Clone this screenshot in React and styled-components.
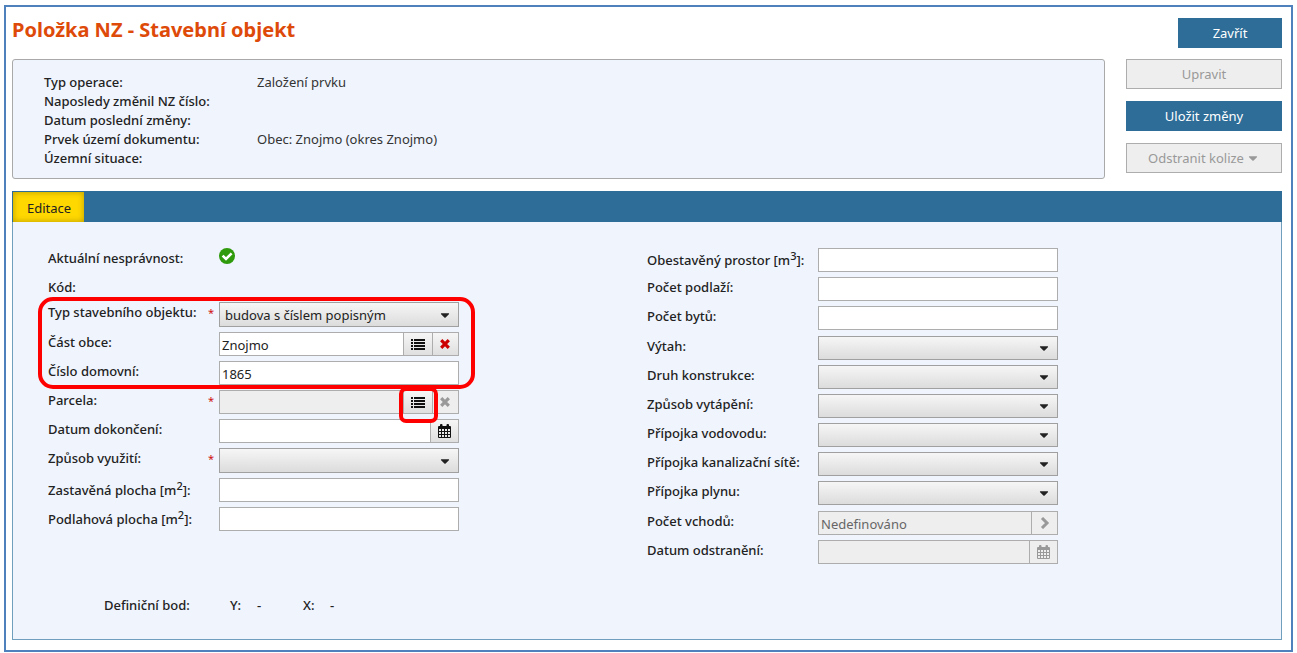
import { useId } from 'react'
import styled, { createGlobalStyle, css } from 'styled-components'
import { FaCaretDown } from 'react-icons/fa'

const GlobalStyle = createGlobalStyle`
  :root {
    --brand: #2d6d98;
    --accent: #de4a09;
    --surface: #eff4fd;
    --disabled: #eeeeee;
    --field-border: #adadad;
    --text: #222222;
    --text-light: #333333;
    --mark: #ff0000;
  }
  * {
    box-sizing: border-box;
  }
  body {
    margin: 0;
    background-color: #ffffff;
    color: var(--text);
    font-family: 'Noto Sans', 'Open Sans', sans-serif;
    font-size: 13px;
    line-height: 20px;
  }
  button,
  input,
  select {
    font: inherit;
    color: inherit;
  }
`

const Page = styled.main`
  margin: 5px 4px 1px;
  padding: 11px 9px 10px 6px;
  border: 2px solid #4f81bd;
`

const Header = styled.header`
  display: flex;
  justify-content: space-between;
  align-items: flex-start;
  margin-bottom: 11px;
`
const Title = styled.h1`
  margin: 0;
  color: var(--accent);
  font-size: 20px;
  font-weight: 700;
  line-height: 24px;
`

const ActionButton = styled.button`
  display: flex;
  justify-content: center;
  align-items: center;
  gap: 2px;
  width: ${({ $compact }) => ($compact ? '104px' : '100%')};
  height: 30px;
  padding: 0;
  border: 1px solid var(--brand);
  background-color: var(--brand);
  color: #ffffff;
  &:disabled {
    border-color: var(--field-border);
    background-color: var(--disabled);
    color: #999999;
  }
`

const Overview = styled.section`
  display: flex;
  align-items: stretch;
  gap: 21px;
  margin-bottom: 12px;
`
const InfoList = styled.dl`
  flex: 1;
  display: grid;
  grid-template-columns: 213px 1fr;
  grid-auto-rows: 19px;
  line-height: 19px;
  margin: 0;
  padding: 13px 31px 10px;
  border: 1px solid #a9a9a9;
  border-radius: 3px;
  background-color: var(--surface);
  dt {
    font-weight: 500;
  }
  dd {
    margin: 0;
    color: var(--text-light);
  }
`
const Actions = styled.div`
  display: flex;
  flex-direction: column;
  gap: 12px;
  width: 156px;
`

const TabBar = styled.nav`
  display: flex;
  height: 31px;
  padding: 1px 1px 0;
  background-color: var(--brand);
`
const Tab = styled.button`
  padding: 2px 13px 0 14px;
  border: 0;
  background-color: #ffd800;
  box-shadow: inset 0 0 6px #b99a00;
`
const Panel = styled.form`
  padding: 26px 35px 24px;
  border: 1px solid #6f9fbd;
  border-top: 0;
  background-color: var(--surface);
`
const Columns = styled.div`
  display: grid;
  grid-template-columns: 1fr 1fr;
`
const Column = styled.div`
  display: flex;
  flex-direction: column;
  align-items: flex-start;
  gap: ${({ $gap }) => $gap}px;
`
const Group = styled.div`
  display: flex;
  flex-direction: column;
  gap: ${({ $gap = 5 }) => $gap}px;
`
// red outline drawn over the form, spreads outside its own box
const outline = css`
  position: relative;
  &::after {
    content: '';
    position: absolute;
    z-index: 1;
    border: 4px solid var(--mark);
    pointer-events: none;
  }
`
const MarkedGroup = styled(Group)`
  ${outline}
  &::after {
    inset: -5px -16px -4px -10px;
    border-radius: 15px;
  }
`
const MarkedButton = styled.span`
  ${outline}
  display: flex;
  &::after {
    inset: -3px -5px -9px -5px;
    border-radius: 7px;
  }
`

const Row = styled.div`
  display: grid;
  grid-template-columns: 160px 11px 240px;
  align-items: start;
`
const Label = styled.label`
  font-weight: 500;
  white-space: nowrap;
  sup {
    font-size: 11px;
    line-height: 16px;
  }
`
const Required = styled.span`
  color: #d01010;
  font-size: 11px;
  line-height: 22px;
`
const Status = styled.span`
  display: flex;
`

const control = css`
  height: ${({ $tall }) => ($tall ? 25 : 24)}px;
  border: 1px solid var(--field-border);
  border-radius: 0;
`
const Field = styled.div`
  display: flex;
`
const Input = styled.input`
  ${control}
  flex: 1;
  min-width: 0;
  padding: 2px 2px 0;
  background-color: #ffffff;
  &:disabled {
    background-color: var(--disabled);
    color: #666666;
  }
`
const IconButton = styled.button`
  ${control}
  display: flex;
  justify-content: center;
  align-items: center;
  width: ${({ $width = 29 }) => $width}px;
  margin-left: -1px;
  padding: 0;
  background: linear-gradient(#f6f6f6, #dfdfdf);
  color: ${({ $danger }) => ($danger ? '#cc0000' : '#111111')};
  &:disabled {
    background: var(--disabled);
    color: #999999;
  }
`
const SelectBox = styled.div`
  position: relative;
  display: flex;
  align-items: center;
  svg {
    position: absolute;
    right: 7px;
    pointer-events: none;
  }
`
const Select = styled.select`
  ${control}
  width: 100%;
  padding: 1px 24px 0 5px;
  appearance: none;
  border-color: #a0a0a0;
  background: linear-gradient(#f6f6f6, #dcdcdc);
`

const Point = styled.dl`
  display: flex;
  margin: 31px 0 0 56px;
  font-weight: 500;
  dt {
    width: 27px;
  }
  dt:first-child {
    width: 126px;
  }
  dd {
    width: 46px;
    margin: 0;
  }
`

const CheckIcon = () => (
  <svg width="16" height="16" viewBox="0 0 16 16" role="img" aria-label="V pořádku">
    <circle cx="8" cy="8" r="8" fill="#2f9a0c" />
    <path d="M3.6 7.6L7 11l5.6-5.6" fill="none" stroke="#ffffff" strokeWidth="2.6" />
  </svg>
)
const ListIcon = () => (
  <svg width="14" height="11" viewBox="0 0 14 11" fill="currentColor" aria-hidden="true">
    <path d="M0 0h2v2H0zM3 0h11v2H3zM0 3h2v2H0zM3 3h11v2H3zM0 6h2v2H0zM3 6h11v2H3zM0 9h2v2H0zM3 9h11v2H3z" />
  </svg>
)
const CrossIcon = () => (
  <svg width="11" height="10" viewBox="0 0 11 10" stroke="currentColor" strokeWidth="3.2" aria-hidden="true">
    <path d="M1.2 1.2l7.6 7.6M8.8 1.2L1.2 8.8" />
  </svg>
)
const ChevronIcon = () => (
  <svg width="10" height="12" viewBox="0 0 10 12" fill="none" stroke="currentColor" strokeWidth="3" aria-hidden="true">
    <path d="M2 1l5 5-5 5" />
  </svg>
)
const CalendarIcon = () => (
  <svg width="13" height="14" viewBox="0 0 13 14" fill="currentColor" aria-hidden="true">
    <path
      fillRule="evenodd"
      d="M1 2h1V1a1 1 0 0 1 1-1h.5a1 1 0 0 1 1 1v1h4V1a1 1 0 0 1 1-1h.5a1 1 0 0 1 1 1v1h1a1 1 0 0 1 1 1v10a1 1 0 0 1-1 1H1a1 1 0 0 1-1-1V3a1 1 0 0 1 1-1zM1 5v2h2V5zM4 5v2h2V5zM7 5v2h2V5zM10 5v2h2V5zM1 8v2h2V8zM4 8v2h2V8zM7 8v2h2V8zM10 8v2h2V8zM1 11v2h2v-2zM4 11v2h2v-2zM7 11v2h2v-2zM10 11v2h2v-2z"
    />
  </svg>
)

const FormRow = ({ label, required, children }) => {
  const id = useId()
  return (
    <Row>
      <Label htmlFor={id}>{label}</Label>
      <Required>{required && '*'}</Required>
      {children(id)}
    </Row>
  )
}

const TextRow = ({ label, required, value = '', disabled, buttons }) => (
  <FormRow label={label} required={required}>
    {(id) => (
      <Field>
        <Input id={id} type="text" defaultValue={value} disabled={disabled} />
        {buttons}
      </Field>
    )}
  </FormRow>
)

const SelectRow = ({ label, required, value = '', tall }) => (
  <FormRow label={label} required={required}>
    {(id) => (
      <SelectBox>
        <Select id={id} defaultValue={value} $tall={tall}>
          <option value={value}>{value}</option>
        </Select>
        <FaCaretDown size={14} />
      </SelectBox>
    )}
  </FormRow>
)

const info = [
  ['Typ operace:', 'Založení prvku'],
  ['Naposledy změnil NZ číslo:', ''],
  ['Datum poslední změny:', ''],
  ['Prvek území dokumentu:', 'Obec: Znojmo (okres Znojmo)'],
  ['Územní situace:', '']
]

const selects = [
  'Výtah:',
  'Druh konstrukce:',
  'Způsob vytápění:',
  'Přípojka vodovodu:',
  'Přípojka kanalizační sítě:',
  'Přípojka plynu:'
]

const App = () => (
  <>
    <GlobalStyle />
    <Page>
      <Header>
        <Title>Položka NZ - Stavební objekt</Title>
        <ActionButton type="button" $compact>
          Zavřít
        </ActionButton>
      </Header>
      <Overview>
        <InfoList>
          {info.map(([name, value]) => [<dt key={name}>{name}</dt>, <dd key={`${name}-value`}>{value}</dd>])}
        </InfoList>
        <Actions>
          <ActionButton type="button" disabled>
            Upravit
          </ActionButton>
          <ActionButton type="button">Uložit změny</ActionButton>
          <ActionButton type="button" disabled>
            Odstranit kolize
            <FaCaretDown size={14} />
          </ActionButton>
        </Actions>
      </Overview>
      <TabBar>
        <Tab type="button">Editace</Tab>
      </TabBar>
      <Panel>
        <Columns>
          <Column $gap={5}>
            <Group $gap={9}>
              <Row>
                <Label as="span">Aktuální nesprávnost:</Label>
                <span />
                <Status>
                  <CheckIcon />
                </Status>
              </Row>
              <Row>
                <Label as="span">Kód:</Label>
              </Row>
            </Group>
            <MarkedGroup>
              <SelectRow label="Typ stavebního objektu:" value="budova s číslem popisným" required tall />
              <TextRow
                label="Část obce:"
                value="Znojmo"
                buttons={
                  <>
                    <IconButton type="button" aria-label="Vybrat" $width={30}>
                      <ListIcon />
                    </IconButton>
                    <IconButton type="button" aria-label="Smazat" $width={27} $danger>
                      <CrossIcon />
                    </IconButton>
                  </>
                }
              />
              <TextRow label="Číslo domovní:" value="1865" />
            </MarkedGroup>
            <Group>
              <TextRow
                label="Parcela:"
                required
                disabled
                buttons={
                  <>
                    <MarkedButton>
                      <IconButton type="button" aria-label="Vybrat" $width={30}>
                        <ListIcon />
                      </IconButton>
                    </MarkedButton>
                    <IconButton type="button" aria-label="Smazat" $width={27} disabled>
                      <CrossIcon />
                    </IconButton>
                  </>
                }
              />
              <TextRow
                label="Datum dokončení:"
                buttons={
                  <IconButton type="button" aria-label="Kalendář">
                    <CalendarIcon />
                  </IconButton>
                }
              />
              <SelectRow label="Způsob využití:" required tall />
              <TextRow
                label={
                  <>
                    Zastavěná plocha [m<sup>2</sup>]:
                  </>
                }
              />
              <TextRow
                label={
                  <>
                    Podlahová plocha [m<sup>2</sup>]:
                  </>
                }
              />
            </Group>
          </Column>
          <Column $gap={6}>
            <Group>
              <TextRow
                label={
                  <>
                    Obestavěný prostor [m<sup>3</sup>]:
                  </>
                }
              />
              <TextRow label="Počet podlaží:" />
              <TextRow label="Počet bytů:" />
            </Group>
            <Group>
              {selects.map((label) => (
                <SelectRow key={label} label={label} />
              ))}
            </Group>
            <Group>
              <TextRow
                label="Počet vchodů:"
                value="Nedefinováno"
                disabled
                buttons={
                  <IconButton type="button" aria-label="Další" $width={27} disabled>
                    <ChevronIcon />
                  </IconButton>
                }
              />
              <TextRow
                label="Datum odstranění:"
                disabled
                buttons={
                  <IconButton type="button" aria-label="Kalendář" disabled>
                    <CalendarIcon />
                  </IconButton>
                }
              />
            </Group>
          </Column>
        </Columns>
        <Point>
          <dt>Definiční bod:</dt>
          <dt>Y:</dt>
          <dd>-</dd>
          <dt>X:</dt>
          <dd>-</dd>
        </Point>
      </Panel>
    </Page>
  </>
)

export default App
